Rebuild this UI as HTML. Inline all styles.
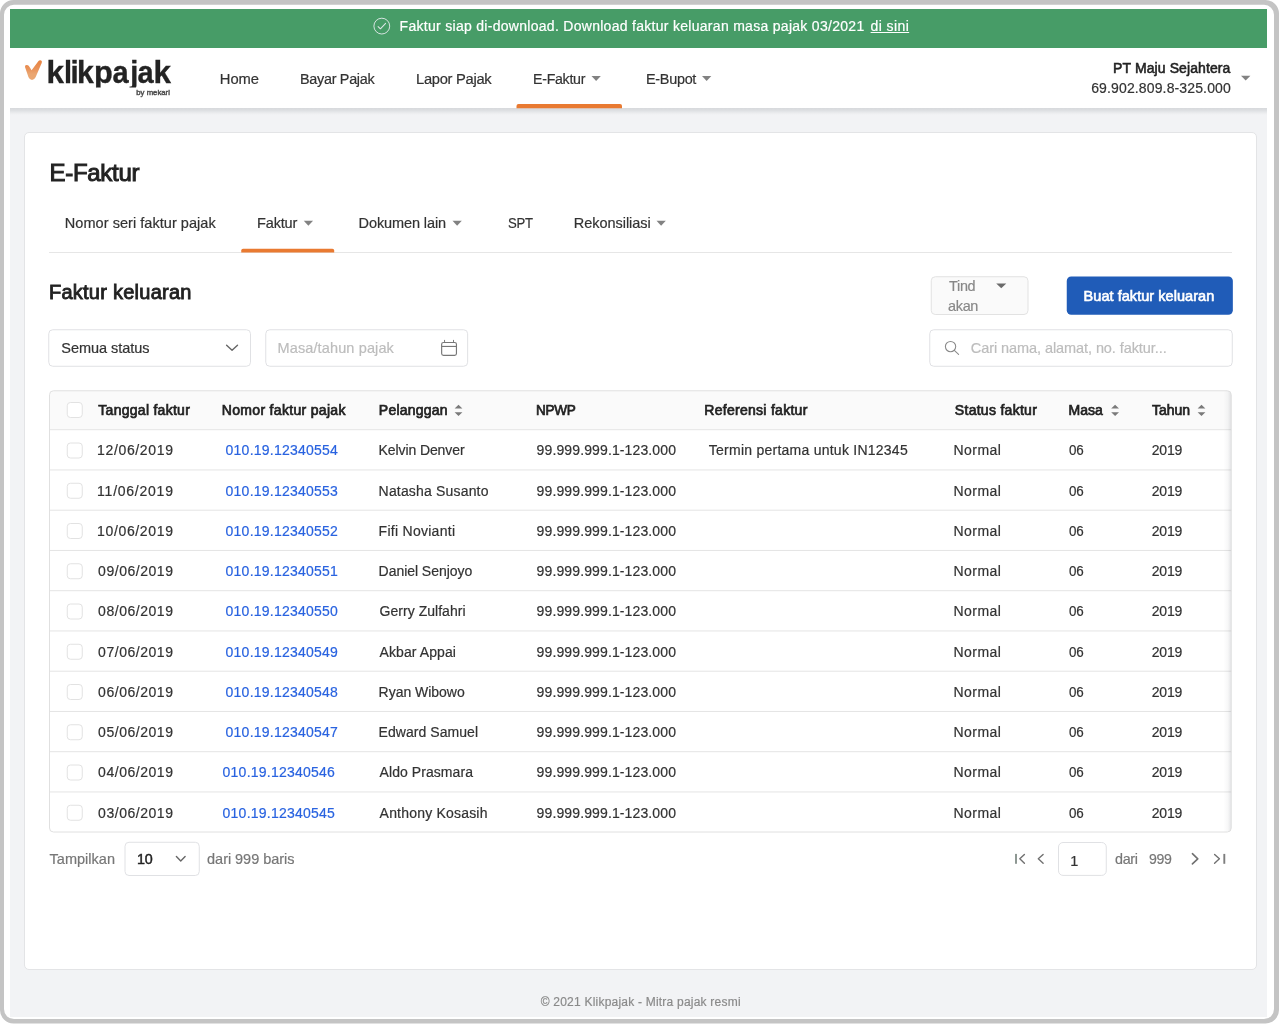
<!DOCTYPE html>
<html lang="id">
<head>
<meta charset="utf-8">
<title>Klikpajak - E-Faktur</title>
<style>
html,body{margin:0;padding:0;background:#fff;}
body{width:1280px;height:1025px;position:relative;overflow:hidden;font-family:"Liberation Sans",sans-serif;}
#frame{position:absolute;left:0;top:0;width:1279.6px;height:1023.6px;box-sizing:border-box;border:4.6px solid #c4c4c4;border-radius:14px;background:#fff;}
#bg{position:absolute;left:10px;top:108px;width:1257px;height:909px;background:#f2f3f5;}
#banner{position:absolute;left:10px;top:9px;width:1257px;height:39.2px;background:#479c67;}
#nav{position:absolute;left:10px;top:48.2px;width:1257px;height:60px;background:#fff;}
#navshadow{position:absolute;left:10px;top:108.2px;width:1257px;height:7px;background:linear-gradient(to bottom,#d7d9dc 0,#dcdee1 30%,#e6e8ea 58%,#eff0f2 85%,#f2f3f5 100%);}
#card{position:absolute;left:24px;top:132px;width:1233px;height:838px;box-sizing:border-box;background:#fff;border:1px solid #e3e4e6;border-radius:5px;}
svg#shapes{position:absolute;left:0;top:0;width:1280px;height:1025px;overflow:visible;}
.t{position:absolute;white-space:pre;line-height:20px;height:20px;font-family:"Liberation Sans",sans-serif;}
</style>
</head>
<body>
<svg id="framesvg" viewBox="0 0 1280 1025" width="1280" height="1025" style="position:absolute;left:0;top:0">
<path fill-rule="evenodd" fill="#c4c4c4" d="M13.5 0 H1265.5 A13.5 13.5 0 0 1 1279 13.5 V1010 A13.5 13.5 0 0 1 1265.5 1023.5 H13.5 A13.5 13.5 0 0 1 0 1010 V13.5 A13.5 13.5 0 0 1 13.5 0 Z M14 4.7 A10 10 0 0 0 4 14.7 V1009.1 A10 10 0 0 0 14 1019.1 H1264 A10 10 0 0 0 1274 1009.1 V14.7 A10 10 0 0 0 1264 4.7 Z"/>
</svg>
<div id="bg"></div>
<div id="navshadow"></div>
<div id="banner"></div>
<div id="nav"></div>
<div id="card"></div>
<div id="layer" style="position:absolute;left:0;top:0;width:1280px;height:1025px;will-change:transform;">
<svg id="shapes" viewBox="0 0 1280 1025" width="1280" height="1025">
<defs>
<linearGradient id="lg" x1="0" y1="60" x2="0" y2="80" gradientUnits="userSpaceOnUse">
<stop offset="0" stop-color="#e88240"/><stop offset="0.45" stop-color="#e9935a"/><stop offset="0.7" stop-color="#eaa671"/><stop offset="1" stop-color="#eaa772"/>
</linearGradient>
<linearGradient id="tsh" x1="1223.5" y1="0" x2="1231.5" y2="0" gradientUnits="userSpaceOnUse">
<stop offset="0" stop-color="#1c2433" stop-opacity="0"/><stop offset="0.55" stop-color="#1c2433" stop-opacity="0.035"/><stop offset="1" stop-color="#1c2433" stop-opacity="0.13"/>
</linearGradient>
<clipPath id="lclip"><rect x="40" y="50" width="140" height="37.6"/></clipPath>
<clipPath id="tclip"><rect x="49.5" y="390.75" width="1181.75" height="441.25" rx="4"/></clipPath>
</defs>

<!-- banner icon -->
<circle cx="381.8" cy="26.1" r="7.9" fill="none" stroke="#eef0f6" stroke-width="1" stroke-opacity=".85"/>
<path d="M378.1 26.6 L380.4 28.8 L385.6 23.4" fill="none" stroke="#eef0f6" stroke-width="1.05" stroke-opacity=".9" stroke-linecap="round" stroke-linejoin="round"/>

<!-- logo -->
<path d="M25,67 Q24.7,65.1 26.5,65 Q28,64.9 28.9,66.1 L31.6,70.2 L38.5,60.9 Q39.7,59.8 41.2,60.5 Q42.4,61.4 41.7,63 L35.6,77.3 Q34.2,80 32,80 Q29.8,80 28.5,77.3 Z" fill="url(#lg)"/>
<g clip-path="url(#lclip)"><g font-family="Liberation Sans, sans-serif" font-weight="700" font-size="32.2" fill="#232323" stroke="#232323" stroke-width="0.35"><text transform="translate(46.45,83.4) scale(0.975,1)">k</text><text transform="translate(63.95,83.4) scale(0.900,1)">l</text><text transform="translate(70.43,83.4) scale(0.910,1)">i</text><text transform="translate(77.12,83.4) scale(0.938,1)">k</text><text transform="translate(94.09,83.4) scale(0.953,1)">p</text><text transform="translate(112.40,83.4) scale(0.900,1)">a</text><text transform="translate(130.20,83.4) scale(0.900,1)">j</text><text transform="translate(137.50,83.4) scale(0.900,1)">a</text><text transform="translate(153.45,83.4) scale(0.975,1)">k</text></g></g>
<text x="136.3" y="94.5" font-family="Liberation Sans, sans-serif" font-weight="400" font-size="7.8" fill="#4a4a4a" stroke="#4a4a4a" stroke-width="0.42" textLength="33.6" lengthAdjust="spacingAndGlyphs">by mekari</text>

<!-- nav carets -->
<g fill="#828282">
<path d="M591.5 76 h9.3 l-4.65 5 z"/>
<path d="M702 76 h9.3 l-4.65 5 z"/>
<path d="M1241 75.7 h9.4 l-4.7 4.9 z"/>
<path d="M303.75 220.75 h9.3 l-4.65 5 z"/>
<path d="M452.5 220.75 h9.3 l-4.65 5 z"/>
<path d="M656.5 220.75 h9.3 l-4.65 5 z"/>
</g>
<!-- orange underlines -->
<path d="M516.5 108.2 V106 Q516.5 104 518.5 104 H620 Q622 104 622 106 V108.2 Z" fill="#e97a31"/>
<rect x="49" y="252" width="1183" height="1" fill="#e6e6e6"/>
<path d="M241.25 252.6 V250.5 Q241.25 248.75 243 248.75 H332.4 Q334.2 248.75 334.2 250.5 V252.6 Z" fill="#e97a31"/>

<!-- Tindakan button -->
<rect x="931.25" y="276.75" width="96.75" height="37.75" rx="4" fill="#fafafa" stroke="#e2e2e2" stroke-width="1"/>
<path d="M996.25 283.5 h10 l-5 4.8 z" fill="#6a6a6a"/>
<!-- blue button -->
<rect x="1066.75" y="276.4" width="166.1" height="38.3" rx="4.5" fill="#205cb8"/>
<!-- select -->
<rect x="48.75" y="329.75" width="201.75" height="36.5" rx="4" fill="#fff" stroke="#e0e1e4" stroke-width="1"/>
<path d="M226.6 345.2 L232.05 350.3 L237.5 345.2" fill="none" stroke="#666" stroke-width="1.4" stroke-linecap="round" stroke-linejoin="round"/>
<!-- date -->
<rect x="265.75" y="329.75" width="201.9" height="36.5" rx="4" fill="#fff" stroke="#e0e1e4" stroke-width="1"/>
<g fill="none" stroke="#777" stroke-width="1.15" stroke-linecap="round">
<rect x="441.65" y="342.5" width="14.8" height="12.9" rx="1.8"/>
<path d="M441.7 346.45 H456.4" stroke-linecap="butt"/><path d="M444.55 340.3 V342.3 M453.5 340.3 V342.3" stroke-width="0.95"/>
</g>
<!-- search -->
<rect x="929.75" y="329.75" width="302.5" height="36.5" rx="4" fill="#fff" stroke="#e0e1e4" stroke-width="1"/>
<g fill="none" stroke="#8a8a8a" stroke-width="1.1" stroke-linecap="round">
<circle cx="950.55" cy="346.6" r="5.15"/>
<path d="M954.3 350.4 L958.6 354.3"/>
</g>

<!-- table -->
<g clip-path="url(#tclip)">
<rect x="49" y="390" width="1183" height="443" fill="#fff"/>
<rect x="49" y="390" width="1183" height="39.6" fill="#fafafa"/>
<g fill="#e4e4e4">
<rect x="49" y="429.20" width="1183" height="1" />
<rect x="49" y="469.45" width="1183" height="1" />
<rect x="49" y="509.70" width="1183" height="1" />
<rect x="49" y="549.95" width="1183" height="1" />
<rect x="49" y="590.20" width="1183" height="1" />
<rect x="49" y="630.45" width="1183" height="1" />
<rect x="49" y="670.70" width="1183" height="1" />
<rect x="49" y="710.95" width="1183" height="1" />
<rect x="49" y="751.20" width="1183" height="1" />
<rect x="49" y="791.45" width="1183" height="1" />
</g>
<rect x="1219" y="390" width="12.5" height="443" fill="url(#tsh)"/>
</g>
<rect x="49.5" y="390.75" width="1181.75" height="441.25" rx="4" fill="none" stroke="#e0e0e0" stroke-width="1"/>
<rect x="67.25" y="402.50" width="15" height="15" rx="3.2" fill="#fff" stroke="#e2e2e2" stroke-width="1"/>
<rect x="67.25" y="443.00" width="15" height="15" rx="3.2" fill="#fff" stroke="#e2e2e2" stroke-width="1"/>
<rect x="67.25" y="483.25" width="15" height="15" rx="3.2" fill="#fff" stroke="#e2e2e2" stroke-width="1"/>
<rect x="67.25" y="523.50" width="15" height="15" rx="3.2" fill="#fff" stroke="#e2e2e2" stroke-width="1"/>
<rect x="67.25" y="563.75" width="15" height="15" rx="3.2" fill="#fff" stroke="#e2e2e2" stroke-width="1"/>
<rect x="67.25" y="604.00" width="15" height="15" rx="3.2" fill="#fff" stroke="#e2e2e2" stroke-width="1"/>
<rect x="67.25" y="644.25" width="15" height="15" rx="3.2" fill="#fff" stroke="#e2e2e2" stroke-width="1"/>
<rect x="67.25" y="684.50" width="15" height="15" rx="3.2" fill="#fff" stroke="#e2e2e2" stroke-width="1"/>
<rect x="67.25" y="724.75" width="15" height="15" rx="3.2" fill="#fff" stroke="#e2e2e2" stroke-width="1"/>
<rect x="67.25" y="765.00" width="15" height="15" rx="3.2" fill="#fff" stroke="#e2e2e2" stroke-width="1"/>
<rect x="67.25" y="805.25" width="15" height="15" rx="3.2" fill="#fff" stroke="#e2e2e2" stroke-width="1"/>
<!-- sort icons -->
<g fill="#7a7a7a">
<path d="M454.6 408.6 l3.9 -3.9 l3.9 3.9 z M454.6 412.2 l3.9 3.9 l3.9 -3.9 z"/>
<path d="M1111.2 408.6 l3.9 -3.9 l3.9 3.9 z M1111.2 412.2 l3.9 3.9 l3.9 -3.9 z"/>
<path d="M1197.6 408.6 l3.9 -3.9 l3.9 3.9 z M1197.6 412.2 l3.9 3.9 l3.9 -3.9 z"/>
</g>

<!-- footer controls -->
<rect x="125" y="842.25" width="74.25" height="33.25" rx="4" fill="#fff" stroke="#e0e1e4" stroke-width="1"/>
<path d="M176.4 856.5 L180.75 860.9 L185.1 856.5" fill="none" stroke="#666" stroke-width="1.4" stroke-linecap="round" stroke-linejoin="round"/>
<rect x="1058.5" y="842.5" width="47.75" height="32.9" rx="4.5" fill="#fff" stroke="#e0e1e4" stroke-width="1"/>
<g fill="none" stroke="#707070" stroke-width="1.4" stroke-linecap="round" stroke-linejoin="round">
<path d="M1024.4 854.4 L1019.8 858.8 L1024.4 863.2"/>
<path d="M1043.1 854.4 L1038.3 858.8 L1043.1 863.2"/>
<path d="M1192.4 853.7 L1197.8 858.8 L1192.4 863.9" stroke-width="1.6"/>
<path d="M1214.6 854.4 L1219.4 858.8 L1214.6 863.2"/>
</g>
<rect x="1015.05" y="853.9" width="1.9" height="9.9" fill="#89938e"/>
<rect x="1223.35" y="853.9" width="1.9" height="9.9" fill="#7e7e7e"/>
</svg>
<span class="t" style="left:399.60px;top:16.00px;font-size:14px;color:#fff;letter-spacing:0.290px;-webkit-text-stroke:0.2px #fff;">Faktur siap di-download. Download faktur keluaran masa pajak 03/2021</span>
<span class="t" style="left:870.60px;top:16.00px;font-size:14px;color:#fff;letter-spacing:0.395px;-webkit-text-stroke:0.2px #fff;text-decoration:underline;text-underline-offset:1px;">di sini</span>
<span class="t" style="left:219.85px;top:69.00px;font-size:14.75px;color:#333;letter-spacing:-0.114px;-webkit-text-stroke:0.2px #333;">Home</span>
<span class="t" style="left:299.62px;top:69.00px;font-size:14.75px;color:#333;letter-spacing:-0.300px;-webkit-text-stroke:0.2px #333;transform:scaleX(0.9758);transform-origin:0 0;">Bayar Pajak</span>
<span class="t" style="left:415.60px;top:69.00px;font-size:14.75px;color:#333;letter-spacing:-0.300px;-webkit-text-stroke:0.2px #333;transform:scaleX(0.9994);transform-origin:0 0;">Lapor Pajak</span>
<span class="t" style="left:532.88px;top:69.00px;font-size:14.75px;color:#333;letter-spacing:-0.300px;-webkit-text-stroke:0.2px #333;transform:scaleX(0.9630);transform-origin:0 0;">E-Faktur</span>
<span class="t" style="left:645.87px;top:69.00px;font-size:14.75px;color:#333;letter-spacing:-0.300px;-webkit-text-stroke:0.2px #333;transform:scaleX(0.9783);transform-origin:0 0;">E-Bupot</span>
<span class="t" style="left:1113.08px;top:58.00px;font-size:14px;color:#222;letter-spacing:0.099px;-webkit-text-stroke:0.55px #222;">PT Maju Sejahtera</span>
<span class="t" style="left:1091.20px;top:78.00px;font-size:14px;color:#333;letter-spacing:0.135px;-webkit-text-stroke:0.2px #333;">69.902.809.8-325.000</span>
<span class="t" style="left:49.50px;top:163.00px;font-size:24px;color:#222;letter-spacing:-0.289px;-webkit-text-stroke:1.0px #222;">E-Faktur</span>
<span class="t" style="left:64.85px;top:213.00px;font-size:14.5px;color:#333;letter-spacing:0.042px;-webkit-text-stroke:0.2px #333;">Nomor seri faktur pajak</span>
<span class="t" style="left:257.10px;top:213.00px;font-size:14.5px;color:#333;letter-spacing:-0.193px;-webkit-text-stroke:0.2px #333;">Faktur</span>
<span class="t" style="left:358.60px;top:213.00px;font-size:14.5px;color:#333;letter-spacing:-0.108px;-webkit-text-stroke:0.2px #333;">Dokumen lain</span>
<span class="t" style="left:507.79px;top:213.00px;font-size:14.5px;color:#333;letter-spacing:-0.300px;-webkit-text-stroke:0.2px #333;transform:scaleX(0.9054);transform-origin:0 0;">SPT</span>
<span class="t" style="left:573.80px;top:213.00px;font-size:14.5px;color:#333;letter-spacing:-0.040px;-webkit-text-stroke:0.2px #333;">Rekonsiliasi</span>
<span class="t" style="left:48.92px;top:282.00px;font-size:20px;color:#222;letter-spacing:0.255px;-webkit-text-stroke:0.85px #222;">Faktur keluaran</span>
<span class="t" style="left:948.85px;top:276.00px;font-size:14.5px;color:#888;letter-spacing:-0.300px;-webkit-text-stroke:0.2px #888;transform:scaleX(0.9942);transform-origin:0 0;">Tind</span>
<span class="t" style="left:948.35px;top:296.00px;font-size:14.5px;color:#888;letter-spacing:-0.300px;-webkit-text-stroke:0.2px #888;transform:scaleX(0.9942);transform-origin:0 0;">akan</span>
<span class="t" style="left:1083.55px;top:286.00px;font-size:14.5px;color:#fff;letter-spacing:0.050px;-webkit-text-stroke:0.6px #fff;">Buat faktur keluaran</span>
<span class="t" style="left:61.35px;top:338.00px;font-size:14.5px;color:#333;letter-spacing:-0.055px;-webkit-text-stroke:0.2px #333;">Semua status</span>
<span class="t" style="left:277.50px;top:338.00px;font-size:14.5px;color:#bdbdbd;letter-spacing:0.126px;-webkit-text-stroke:0.2px #bdbdbd;">Masa/tahun pajak</span>
<span class="t" style="left:970.85px;top:338.00px;font-size:14.5px;color:#bdbdbd;letter-spacing:-0.078px;-webkit-text-stroke:0.2px #bdbdbd;">Cari nama, alamat, no. faktur...</span>
<span class="t" style="left:98.35px;top:400.00px;font-size:14px;color:#222;letter-spacing:0.271px;-webkit-text-stroke:0.7px #222;">Tanggal faktur</span>
<span class="t" style="left:221.85px;top:400.00px;font-size:14px;color:#222;letter-spacing:0.311px;-webkit-text-stroke:0.7px #222;">Nomor faktur pajak</span>
<span class="t" style="left:378.85px;top:400.00px;font-size:14px;color:#222;letter-spacing:0.204px;-webkit-text-stroke:0.7px #222;">Pelanggan</span>
<span class="t" style="left:535.87px;top:400.00px;font-size:14px;color:#222;letter-spacing:-0.300px;-webkit-text-stroke:0.7px #222;transform:scaleX(0.9700);transform-origin:0 0;">NPWP</span>
<span class="t" style="left:704.35px;top:400.00px;font-size:14px;color:#222;letter-spacing:0.276px;-webkit-text-stroke:0.7px #222;">Referensi faktur</span>
<span class="t" style="left:954.85px;top:400.00px;font-size:14px;color:#222;letter-spacing:0.281px;-webkit-text-stroke:0.7px #222;">Status faktur</span>
<span class="t" style="left:1068.60px;top:400.00px;font-size:14px;color:#222;letter-spacing:-0.049px;-webkit-text-stroke:0.7px #222;">Masa</span>
<span class="t" style="left:1152.10px;top:400.00px;font-size:14px;color:#222;letter-spacing:-0.077px;-webkit-text-stroke:0.7px #222;">Tahun</span>
<span class="t" style="left:97.10px;top:440.00px;font-size:14px;color:#333;letter-spacing:0.641px;-webkit-text-stroke:0.2px #333;">12/06/2019</span>
<span class="t" style="left:225.60px;top:440.00px;font-size:14px;color:#2963e0;letter-spacing:0.228px;-webkit-text-stroke:0.2px #2963e0;">010.19.12340554</span>
<span class="t" style="left:378.60px;top:440.00px;font-size:14px;color:#333;letter-spacing:-0.099px;-webkit-text-stroke:0.2px #333;">Kelvin Denver</span>
<span class="t" style="left:536.60px;top:440.00px;font-size:14px;color:#333;letter-spacing:0.122px;-webkit-text-stroke:0.2px #333;">99.999.999.1-123.000</span>
<span class="t" style="left:708.85px;top:440.00px;font-size:14px;color:#333;letter-spacing:0.245px;-webkit-text-stroke:0.2px #333;">Termin pertama untuk IN12345</span>
<span class="t" style="left:953.60px;top:440.00px;font-size:14px;color:#333;letter-spacing:0.409px;-webkit-text-stroke:0.2px #333;">Normal</span>
<span class="t" style="left:1069.35px;top:440.00px;font-size:14px;color:#333;letter-spacing:-0.300px;-webkit-text-stroke:0.2px #333;transform:scaleX(0.9563);transform-origin:0 0;">06</span>
<span class="t" style="left:1151.85px;top:440.00px;font-size:14px;color:#333;letter-spacing:-0.269px;-webkit-text-stroke:0.2px #333;">2019</span>
<span class="t" style="left:97.10px;top:481.00px;font-size:14px;color:#333;letter-spacing:0.756px;-webkit-text-stroke:0.2px #333;">11/06/2019</span>
<span class="t" style="left:225.60px;top:481.00px;font-size:14px;color:#2963e0;letter-spacing:0.228px;-webkit-text-stroke:0.2px #2963e0;">010.19.12340553</span>
<span class="t" style="left:378.60px;top:481.00px;font-size:14px;color:#333;letter-spacing:0.174px;-webkit-text-stroke:0.2px #333;">Natasha Susanto</span>
<span class="t" style="left:536.60px;top:481.00px;font-size:14px;color:#333;letter-spacing:0.122px;-webkit-text-stroke:0.2px #333;">99.999.999.1-123.000</span>
<span class="t" style="left:953.60px;top:481.00px;font-size:14px;color:#333;letter-spacing:0.409px;-webkit-text-stroke:0.2px #333;">Normal</span>
<span class="t" style="left:1069.35px;top:481.00px;font-size:14px;color:#333;letter-spacing:-0.300px;-webkit-text-stroke:0.2px #333;transform:scaleX(0.9563);transform-origin:0 0;">06</span>
<span class="t" style="left:1151.85px;top:481.00px;font-size:14px;color:#333;letter-spacing:-0.269px;-webkit-text-stroke:0.2px #333;">2019</span>
<span class="t" style="left:97.10px;top:521.00px;font-size:14px;color:#333;letter-spacing:0.641px;-webkit-text-stroke:0.2px #333;">10/06/2019</span>
<span class="t" style="left:225.60px;top:521.00px;font-size:14px;color:#2963e0;letter-spacing:0.228px;-webkit-text-stroke:0.2px #2963e0;">010.19.12340552</span>
<span class="t" style="left:378.60px;top:521.00px;font-size:14px;color:#333;letter-spacing:0.273px;-webkit-text-stroke:0.2px #333;">Fifi Novianti</span>
<span class="t" style="left:536.60px;top:521.00px;font-size:14px;color:#333;letter-spacing:0.122px;-webkit-text-stroke:0.2px #333;">99.999.999.1-123.000</span>
<span class="t" style="left:953.60px;top:521.00px;font-size:14px;color:#333;letter-spacing:0.409px;-webkit-text-stroke:0.2px #333;">Normal</span>
<span class="t" style="left:1069.35px;top:521.00px;font-size:14px;color:#333;letter-spacing:-0.300px;-webkit-text-stroke:0.2px #333;transform:scaleX(0.9563);transform-origin:0 0;">06</span>
<span class="t" style="left:1151.85px;top:521.00px;font-size:14px;color:#333;letter-spacing:-0.269px;-webkit-text-stroke:0.2px #333;">2019</span>
<span class="t" style="left:98.10px;top:561.00px;font-size:14px;color:#333;letter-spacing:0.530px;-webkit-text-stroke:0.2px #333;">09/06/2019</span>
<span class="t" style="left:225.60px;top:561.00px;font-size:14px;color:#2963e0;letter-spacing:0.228px;-webkit-text-stroke:0.2px #2963e0;">010.19.12340551</span>
<span class="t" style="left:378.60px;top:561.00px;font-size:14px;color:#333;letter-spacing:-0.045px;-webkit-text-stroke:0.2px #333;">Daniel Senjoyo</span>
<span class="t" style="left:536.60px;top:561.00px;font-size:14px;color:#333;letter-spacing:0.122px;-webkit-text-stroke:0.2px #333;">99.999.999.1-123.000</span>
<span class="t" style="left:953.60px;top:561.00px;font-size:14px;color:#333;letter-spacing:0.409px;-webkit-text-stroke:0.2px #333;">Normal</span>
<span class="t" style="left:1069.35px;top:561.00px;font-size:14px;color:#333;letter-spacing:-0.300px;-webkit-text-stroke:0.2px #333;transform:scaleX(0.9563);transform-origin:0 0;">06</span>
<span class="t" style="left:1151.85px;top:561.00px;font-size:14px;color:#333;letter-spacing:-0.269px;-webkit-text-stroke:0.2px #333;">2019</span>
<span class="t" style="left:98.10px;top:601.00px;font-size:14px;color:#333;letter-spacing:0.530px;-webkit-text-stroke:0.2px #333;">08/06/2019</span>
<span class="t" style="left:225.60px;top:601.00px;font-size:14px;color:#2963e0;letter-spacing:0.228px;-webkit-text-stroke:0.2px #2963e0;">010.19.12340550</span>
<span class="t" style="left:379.60px;top:601.00px;font-size:14px;color:#333;letter-spacing:0.026px;-webkit-text-stroke:0.2px #333;">Gerry Zulfahri</span>
<span class="t" style="left:536.60px;top:601.00px;font-size:14px;color:#333;letter-spacing:0.122px;-webkit-text-stroke:0.2px #333;">99.999.999.1-123.000</span>
<span class="t" style="left:953.60px;top:601.00px;font-size:14px;color:#333;letter-spacing:0.409px;-webkit-text-stroke:0.2px #333;">Normal</span>
<span class="t" style="left:1069.35px;top:601.00px;font-size:14px;color:#333;letter-spacing:-0.300px;-webkit-text-stroke:0.2px #333;transform:scaleX(0.9563);transform-origin:0 0;">06</span>
<span class="t" style="left:1151.85px;top:601.00px;font-size:14px;color:#333;letter-spacing:-0.269px;-webkit-text-stroke:0.2px #333;">2019</span>
<span class="t" style="left:98.10px;top:642.00px;font-size:14px;color:#333;letter-spacing:0.530px;-webkit-text-stroke:0.2px #333;">07/06/2019</span>
<span class="t" style="left:225.60px;top:642.00px;font-size:14px;color:#2963e0;letter-spacing:0.228px;-webkit-text-stroke:0.2px #2963e0;">010.19.12340549</span>
<span class="t" style="left:379.60px;top:642.00px;font-size:14px;color:#333;letter-spacing:0.089px;-webkit-text-stroke:0.2px #333;">Akbar Appai</span>
<span class="t" style="left:536.60px;top:642.00px;font-size:14px;color:#333;letter-spacing:0.122px;-webkit-text-stroke:0.2px #333;">99.999.999.1-123.000</span>
<span class="t" style="left:953.60px;top:642.00px;font-size:14px;color:#333;letter-spacing:0.409px;-webkit-text-stroke:0.2px #333;">Normal</span>
<span class="t" style="left:1069.35px;top:642.00px;font-size:14px;color:#333;letter-spacing:-0.300px;-webkit-text-stroke:0.2px #333;transform:scaleX(0.9563);transform-origin:0 0;">06</span>
<span class="t" style="left:1151.85px;top:642.00px;font-size:14px;color:#333;letter-spacing:-0.269px;-webkit-text-stroke:0.2px #333;">2019</span>
<span class="t" style="left:98.10px;top:682.00px;font-size:14px;color:#333;letter-spacing:0.530px;-webkit-text-stroke:0.2px #333;">06/06/2019</span>
<span class="t" style="left:225.60px;top:682.00px;font-size:14px;color:#2963e0;letter-spacing:0.228px;-webkit-text-stroke:0.2px #2963e0;">010.19.12340548</span>
<span class="t" style="left:378.60px;top:682.00px;font-size:14px;color:#333;letter-spacing:-0.028px;-webkit-text-stroke:0.2px #333;">Ryan Wibowo</span>
<span class="t" style="left:536.60px;top:682.00px;font-size:14px;color:#333;letter-spacing:0.122px;-webkit-text-stroke:0.2px #333;">99.999.999.1-123.000</span>
<span class="t" style="left:953.60px;top:682.00px;font-size:14px;color:#333;letter-spacing:0.409px;-webkit-text-stroke:0.2px #333;">Normal</span>
<span class="t" style="left:1069.35px;top:682.00px;font-size:14px;color:#333;letter-spacing:-0.300px;-webkit-text-stroke:0.2px #333;transform:scaleX(0.9563);transform-origin:0 0;">06</span>
<span class="t" style="left:1151.85px;top:682.00px;font-size:14px;color:#333;letter-spacing:-0.269px;-webkit-text-stroke:0.2px #333;">2019</span>
<span class="t" style="left:98.10px;top:722.00px;font-size:14px;color:#333;letter-spacing:0.530px;-webkit-text-stroke:0.2px #333;">05/06/2019</span>
<span class="t" style="left:225.60px;top:722.00px;font-size:14px;color:#2963e0;letter-spacing:0.228px;-webkit-text-stroke:0.2px #2963e0;">010.19.12340547</span>
<span class="t" style="left:378.60px;top:722.00px;font-size:14px;color:#333;letter-spacing:0.049px;-webkit-text-stroke:0.2px #333;">Edward Samuel</span>
<span class="t" style="left:536.60px;top:722.00px;font-size:14px;color:#333;letter-spacing:0.122px;-webkit-text-stroke:0.2px #333;">99.999.999.1-123.000</span>
<span class="t" style="left:953.60px;top:722.00px;font-size:14px;color:#333;letter-spacing:0.409px;-webkit-text-stroke:0.2px #333;">Normal</span>
<span class="t" style="left:1069.35px;top:722.00px;font-size:14px;color:#333;letter-spacing:-0.300px;-webkit-text-stroke:0.2px #333;transform:scaleX(0.9563);transform-origin:0 0;">06</span>
<span class="t" style="left:1151.85px;top:722.00px;font-size:14px;color:#333;letter-spacing:-0.269px;-webkit-text-stroke:0.2px #333;">2019</span>
<span class="t" style="left:98.10px;top:762.00px;font-size:14px;color:#333;letter-spacing:0.530px;-webkit-text-stroke:0.2px #333;">04/06/2019</span>
<span class="t" style="left:222.60px;top:762.00px;font-size:14px;color:#2963e0;letter-spacing:0.228px;-webkit-text-stroke:0.2px #2963e0;">010.19.12340546</span>
<span class="t" style="left:379.60px;top:762.00px;font-size:14px;color:#333;letter-spacing:0.062px;-webkit-text-stroke:0.2px #333;">Aldo Prasmara</span>
<span class="t" style="left:536.60px;top:762.00px;font-size:14px;color:#333;letter-spacing:0.122px;-webkit-text-stroke:0.2px #333;">99.999.999.1-123.000</span>
<span class="t" style="left:953.60px;top:762.00px;font-size:14px;color:#333;letter-spacing:0.409px;-webkit-text-stroke:0.2px #333;">Normal</span>
<span class="t" style="left:1069.35px;top:762.00px;font-size:14px;color:#333;letter-spacing:-0.300px;-webkit-text-stroke:0.2px #333;transform:scaleX(0.9563);transform-origin:0 0;">06</span>
<span class="t" style="left:1151.85px;top:762.00px;font-size:14px;color:#333;letter-spacing:-0.269px;-webkit-text-stroke:0.2px #333;">2019</span>
<span class="t" style="left:98.10px;top:803.00px;font-size:14px;color:#333;letter-spacing:0.530px;-webkit-text-stroke:0.2px #333;">03/06/2019</span>
<span class="t" style="left:222.60px;top:803.00px;font-size:14px;color:#2963e0;letter-spacing:0.228px;-webkit-text-stroke:0.2px #2963e0;">010.19.12340545</span>
<span class="t" style="left:379.60px;top:803.00px;font-size:14px;color:#333;letter-spacing:0.198px;-webkit-text-stroke:0.2px #333;">Anthony Kosasih</span>
<span class="t" style="left:536.60px;top:803.00px;font-size:14px;color:#333;letter-spacing:0.122px;-webkit-text-stroke:0.2px #333;">99.999.999.1-123.000</span>
<span class="t" style="left:953.60px;top:803.00px;font-size:14px;color:#333;letter-spacing:0.409px;-webkit-text-stroke:0.2px #333;">Normal</span>
<span class="t" style="left:1069.35px;top:803.00px;font-size:14px;color:#333;letter-spacing:-0.300px;-webkit-text-stroke:0.2px #333;transform:scaleX(0.9563);transform-origin:0 0;">06</span>
<span class="t" style="left:1151.85px;top:803.00px;font-size:14px;color:#333;letter-spacing:-0.269px;-webkit-text-stroke:0.2px #333;">2019</span>
<span class="t" style="left:49.60px;top:849.00px;font-size:14.5px;color:#777;letter-spacing:0.011px;-webkit-text-stroke:0.2px #777;">Tampilkan</span>
<span class="t" style="left:137.24px;top:849.00px;font-size:14.5px;color:#222;letter-spacing:-0.300px;-webkit-text-stroke:0.45px #222;transform:scaleX(0.9859);transform-origin:0 0;">10</span>
<span class="t" style="left:207.10px;top:849.00px;font-size:14.5px;color:#777;letter-spacing:-0.043px;-webkit-text-stroke:0.2px #777;">dari 999 baris</span>
<span class="t" style="left:1070.35px;top:851.00px;font-size:14.5px;color:#333;letter-spacing:0.000px;-webkit-text-stroke:0.2px #333;">1</span>
<span class="t" style="left:1114.50px;top:849.00px;font-size:14.5px;color:#777;letter-spacing:-0.300px;-webkit-text-stroke:0.2px #777;transform:scaleX(0.9889);transform-origin:0 0;">dari</span>
<span class="t" style="left:1149.10px;top:849.00px;font-size:14.5px;color:#777;letter-spacing:-0.300px;-webkit-text-stroke:0.2px #777;transform:scaleX(0.9735);transform-origin:0 0;">999</span>
<span class="t" style="left:540.70px;top:992.00px;font-size:12px;color:#8a8a8a;letter-spacing:0.218px;-webkit-text-stroke:0.2px #8a8a8a;">© 2021 Klikpajak - Mitra pajak resmi</span>
</div>
</body>
</html>
